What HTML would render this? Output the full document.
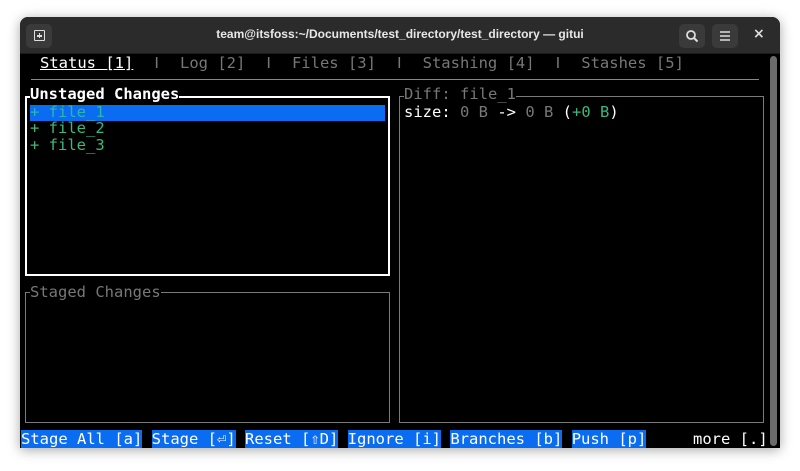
<!DOCTYPE html>
<html><head><meta charset="utf-8"><style>
*{margin:0;padding:0;box-sizing:border-box}
body{width:800px;height:471px;background:#fff;position:relative;overflow:hidden;font-family:"DejaVu Sans Mono","Liberation Mono",monospace}
.win{position:absolute;left:20px;top:17px;width:760px;height:431px;background:#000;border-radius:8px 8px 0 0;box-shadow:0 2px 12px rgba(0,0,0,.35);overflow:hidden}
.tb{position:absolute;left:0;top:0;width:760px;height:37px;background:#2b2b2b;border-bottom:1px solid #1a1a1a}
.title{position:absolute;left:0;right:0;top:10px;text-align:center;color:#e8e8e8;font:bold 12px "Liberation Sans","DejaVu Sans",sans-serif}
.btn{position:absolute;top:7px;width:26px;height:24px;background:#3a3a3a;border-radius:5px}
.t{position:absolute;font-size:15.5px;line-height:18px;white-space:pre;color:#fff}
.box{position:absolute;border:1px solid #7a7a7a}
.g{color:#777}.gr{color:#3cb87c}
.hl{background:#0a6cf0}
</style></head><body>
<div class="win">
 <div class="tb">
  <div class="btn" style="left:6px"><div style="position:absolute;left:8px;top:6px;width:11px;height:11px;border:1.5px solid #ddd;border-radius:1px"></div><div style="position:absolute;left:11px;top:11px;width:5px;height:1.5px;background:#ddd"></div><div style="position:absolute;left:12.7px;top:9px;width:1.5px;height:5px;background:#ddd"></div></div>
  <div class="title">team@itsfoss:~/Documents/test_directory/test_directory — gitui</div>
  <div class="btn" style="left:659px"><svg width="26" height="24"><circle cx="12" cy="11" r="4" fill="none" stroke="#ddd" stroke-width="1.8"/><path d="M15 14l3.5 3.5" stroke="#ddd" stroke-width="2"/></svg></div>
  <div class="btn" style="left:692px"><svg width="26" height="24"><path d="M8 8h10M8 12h10M8 16h10" stroke="#ddd" stroke-width="1.6"/></svg></div>
  <div style="position:absolute;left:733px;top:9px;color:#ddd;font:bold 14px 'DejaVu Sans',sans-serif">×</div>
 </div>
</div>
<div style="position:absolute;left:770px;top:56px;width:7px;height:390px;background:#6b6b6b;border-radius:4px"></div>
<div class="t" style="left:40px;top:54px"><span style="text-decoration:underline">Status [1]</span><span class="g">  ǀ  Log [2]  ǀ  Files [3]  ǀ  Stashing [4]  ǀ  Stashes [5]</span></div>
<div style="position:absolute;left:31px;top:79px;width:728px;height:1px;background:#888"></div>
<div class="box" style="left:25px;top:96px;width:365px;height:180px;border:2px solid #fff"></div>
<div class="t" style="left:30px;top:86px;background:#000;font-weight:bold;line-height:17px">Unstaged Changes</div>
<div class="hl" style="position:absolute;left:30px;top:105px;width:355px;height:16px"></div>
<div class="t" style="left:30px;top:103px;color:#2bb6b0">+ file_1</div>
<div class="t gr" style="left:30px;top:119px">+ file_2</div>
<div class="t gr" style="left:30px;top:136px">+ file_3</div>
<div class="box" style="left:25px;top:292px;width:365px;height:131px"></div>
<div class="t g" style="left:30px;top:283px;background:#000">Staged Changes</div>
<div class="box" style="left:399px;top:96px;width:365px;height:327px"></div>
<div class="t g" style="left:404px;top:86px;background:#000;line-height:17px">Diff: file_1</div>
<div class="t" style="left:404px;top:103px">size: <span class="g">0 B</span> -&gt; <span class="g">0 B</span> (<span class="gr">+0 B</span>)</div>
<div class="t" style="left:21px;top:430px"><span class="hl">Stage All [a]</span> <span class="hl">Stage [⏎]</span> <span class="hl">Reset [⇧D]</span> <span class="hl">Ignore [i]</span> <span class="hl">Branches [b]</span> <span class="hl">Push [p]</span>     more [.]</div>
</body></html>
